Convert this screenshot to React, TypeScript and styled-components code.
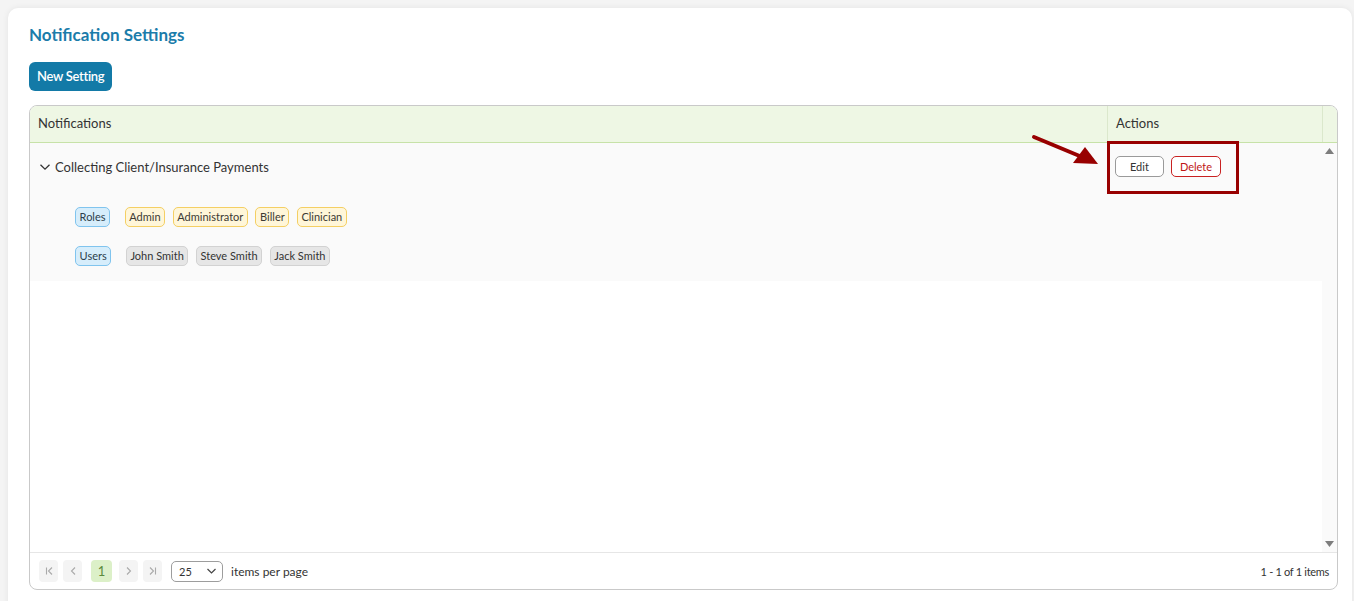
import React from "react";
import styled, { createGlobalStyle } from "styled-components";

const Global = createGlobalStyle`
  html, body { margin: 0; padding: 0; }
  body {
    background: #f4f4f4;
    font-family: Lato, "Open Sans", Arial, sans-serif;
    color: #333;
    overflow: hidden;
  }
`;

const Card = styled.div`
  margin: 8px 2px 0 8px;
  background: #fff;
  border-radius: 10px;
  box-shadow: 0 0 6px rgba(0, 0, 0, 0.07);
  padding: 17px 14px 40px 21px;
  min-height: 620px;
`;

const Title = styled.h1`
  margin: 0;
  font-size: 17px;
  line-height: 20px;
  font-weight: 700;
  color: #1b7caa;
`;

const PrimaryButton = styled.button`
  margin-top: 17px;
  height: 29px;
  padding: 0 8px 2px;
  border: none;
  border-radius: 6px;
  background: #137aa7;
  color: #fff;
  font-family: Lato, sans-serif;
  font-size: 13px;
  font-weight: 600;
  letter-spacing: -0.3px;
  cursor: pointer;
`;

const Grid = styled.div`
  position: relative;
  margin-top: 14px;
  border: 1px solid #c9c9c9;
  border-radius: 8px;
  height: 483px;
  display: flex;
  flex-direction: column;
`;

const HeaderRow = styled.div`
  display: flex;
  height: 36px;
  background: #eef7e4;
  border-bottom: 1px solid #c7e2a8;
  border-radius: 7px 7px 0 0;
  font-size: 13px;
  color: #333;
`;

const HeaderCell = styled.div<{ $w?: number; $divider?: boolean }>`
  ${(p) => (p.$w ? `width: ${p.$w}px; flex: none;` : "flex: 1;")}
  box-sizing: border-box;
  padding-left: ${(p) => (p.$w && p.$w < 20 ? 0 : 8)}px;
  padding-bottom: 2px;
  display: flex;
  align-items: center;
  ${(p) => (p.$divider ? "border-left: 1px solid #dbe8cc;" : "")}
`;

const Body = styled.div`
  flex: 1;
  display: flex;
  min-height: 0;
`;

const Rows = styled.div`
  flex: 1;
  background: #fff;
`;

const Row = styled.div`
  display: flex;
  background: #fafafa;
`;

const MainCell = styled.div`
  flex: 1;
  padding: 14px 0 15px 9px;
`;

const TitleLine = styled.div`
  display: flex;
  align-items: center;
  height: 20px;
  gap: 4px;
  font-size: 13px;
  color: #333;
`;

const TagBlock = styled.div`
  margin-top: 30px;
  padding-left: 36px;
  display: flex;
  flex-direction: column;
  gap: 19px;
`;

const TagLine = styled.div`
  display: flex;
  align-items: center;
  gap: 7.5px;
`;

const tagColors = {
  label: { bg: "#d6edfb", border: "#80c4ee", color: "#2c3e4c" },
  role: { bg: "#fff6d9", border: "#f4cf63", color: "#3c3a33" },
  user: { bg: "#e6e6e6", border: "#d2d2d2", color: "#333" },
};

const Tag = styled.span<{ $kind: keyof typeof tagColors }>`
  box-sizing: border-box;
  height: 20px;
  display: inline-flex;
  align-items: center;
  padding: 0 3.6px 1px;
  border-radius: 5px;
  font-size: 11px;
  background: ${(p) => tagColors[p.$kind].bg};
  border: 1px solid ${(p) => tagColors[p.$kind].border};
  color: ${(p) => tagColors[p.$kind].color};
  ${(p) => (p.$kind === "label" ? "margin-right: 7px;" : "")}
`;

const ActionCell = styled.div`
  width: 215px;
  box-sizing: border-box;
  padding: 13px 0 0 8px;
  display: flex;
  align-items: flex-start;
  gap: 7px;
`;

const ActionButton = styled.button<{ $danger?: boolean }>`
  box-sizing: border-box;
  height: 21px;
  padding: 0 ${(p) => (p.$danger ? 8 : 14)}px 1px;
  background: #fff;
  border-radius: 5px;
  font-family: Lato, sans-serif;
  font-size: 11px;
  border: 1px solid ${(p) => (p.$danger ? "#c92222" : "#9a9a9a")};
  color: ${(p) => (p.$danger ? "#c01515" : "#333")};
  cursor: pointer;
`;

const ScrollTrack = styled.div`
  width: 15px;
  flex: none;
  background: #fafafa;
  display: flex;
  flex-direction: column;
  justify-content: space-between;
  align-items: center;
  padding: 5px 0 5px;
  box-sizing: border-box;
`;

const Footer = styled.div`
  height: 36px;
  border-top: 1px solid #e6e6e6;
  display: flex;
  align-items: center;
  padding: 0 8px 0 9px;
  font-size: 12px;
  color: #333;
`;

const PagerButton = styled.button<{ $active?: boolean; $gap?: number }>`
  box-sizing: border-box;
  width: ${(p) => (p.$active ? 21 : 19)}px;
  height: 22px;
  padding: 0;
  margin-right: ${(p) => p.$gap ?? 5}px;
  border: none;
  border-radius: 4px;
  background: ${(p) => (p.$active ? "#dcf0c8" : "#f4f4f4")};
  color: ${(p) => (p.$active ? "#5b8a3c" : "#aaa")};
  font-family: Lato, sans-serif;
  font-size: 13px;
  display: inline-flex;
  align-items: center;
  justify-content: center;
`;

const PageSize = styled.div`
  box-sizing: border-box;
  width: 52px;
  height: 21px;
  margin-left: 4px;
  border: 1px solid #9d9d9d;
  border-radius: 5px;
  display: flex;
  align-items: center;
  justify-content: space-between;
  padding: 0 5px 0 7px;
  font-size: 11px;
  color: #333;
`;

const PagerLabel = styled.span`
  margin-left: 8px;
  font-size: 12px;
`;

const PagerInfo = styled.span`
  margin-left: auto;
  font-size: 11px;
  letter-spacing: -0.3px;
  color: #333;
`;

const Highlight = styled.div`
  position: absolute;
  left: 1077px;
  top: 35px;
  width: 132px;
  height: 53px;
  box-sizing: border-box;
  border: 3px solid #980000;
  pointer-events: none;
`;

const Arrow = styled.svg`
  position: absolute;
  left: 1000px;
  top: 26px;
  pointer-events: none;
`;

const Chevron = ({ d, color = "#aaa" }: { d: string; color?: string }) => (
  <svg width="10" height="10" viewBox="0 0 10 10" fill="none" stroke={color} strokeWidth="1.1">
    <path d={d} />
  </svg>
);

const roles = ["Admin", "Administrator", "Biller", "Clinician"];
const users = ["John Smith", "Steve Smith", "Jack Smith"];

export default function App() {
  return (
    <>
      <Global />
      <Card>
        <Title>Notification Settings</Title>
        <PrimaryButton>New Setting</PrimaryButton>
        <Grid>
          <HeaderRow>
            <HeaderCell>Notifications</HeaderCell>
            <HeaderCell $w={215} $divider>
              Actions
            </HeaderCell>
            <HeaderCell $w={15} $divider />
          </HeaderRow>
          <Body>
            <Rows>
              <Row>
                <MainCell>
                  <TitleLine>
                    <svg width="12" height="12" viewBox="0 0 12 12" fill="none" stroke="#333" strokeWidth="1.3">
                      <path d="M1.5 3.8 L6 8.2 L10.5 3.8" />
                    </svg>
                    <span>Collecting Client/Insurance Payments</span>
                  </TitleLine>
                  <TagBlock>
                    <TagLine>
                      <Tag $kind="label">Roles</Tag>
                      {roles.map((r) => (
                        <Tag key={r} $kind="role">
                          {r}
                        </Tag>
                      ))}
                    </TagLine>
                    <TagLine>
                      <Tag $kind="label">Users</Tag>
                      {users.map((u) => (
                        <Tag key={u} $kind="user">
                          {u}
                        </Tag>
                      ))}
                    </TagLine>
                  </TagBlock>
                </MainCell>
                <ActionCell>
                  <ActionButton>Edit</ActionButton>
                  <ActionButton $danger>Delete</ActionButton>
                </ActionCell>
              </Row>
            </Rows>
            <ScrollTrack>
              <svg width="9" height="6" viewBox="0 0 9 6">
                <path d="M0 6 L4.5 0 L9 6 Z" fill="#7d7d7d" />
              </svg>
              <svg width="9" height="6" viewBox="0 0 9 6">
                <path d="M0 0 L9 0 L4.5 6 Z" fill="#7d7d7d" />
              </svg>
            </ScrollTrack>
          </Body>
          <Footer>
            <PagerButton>
              <Chevron d="M2.5 1.5 V8.5 M8 1.5 L4.5 5 L8 8.5" />
            </PagerButton>
            <PagerButton $gap={9}>
              <Chevron d="M7 1.5 L3.5 5 L7 8.5" />
            </PagerButton>
            <PagerButton $active $gap={7}>
              1
            </PagerButton>
            <PagerButton>
              <Chevron d="M3 1.5 L6.5 5 L3 8.5" />
            </PagerButton>
            <PagerButton $gap={5}>
              <Chevron d="M2 1.5 L5.5 5 L2 8.5 M7.5 1.5 V8.5" />
            </PagerButton>
            <PageSize>
              <span>25</span>
              <svg width="11" height="8" viewBox="0 0 11 8" fill="none" stroke="#444" strokeWidth="1.2">
                <path d="M1.5 2 L5.5 6 L9.5 2" />
              </svg>
            </PageSize>
            <PagerLabel>items per page</PagerLabel>
            <PagerInfo>1 - 1 of 1 items</PagerInfo>
          </Footer>
          <Arrow width="72" height="36" viewBox="0 0 72 36">
            <line x1="4" y1="5" x2="52" y2="25" stroke="#980000" strokeWidth="4" strokeLinecap="round" />
            <polygon points="68,32 43,31 55,15" fill="#980000" />
          </Arrow>
          <Highlight />
        </Grid>
      </Card>
    </>
  );
}
